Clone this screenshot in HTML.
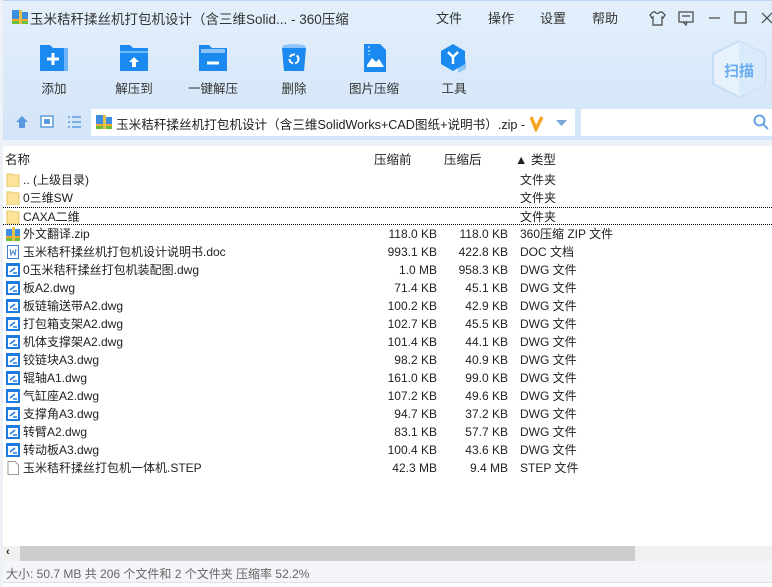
<!DOCTYPE html>
<html><head><meta charset="utf-8"><style>
*{margin:0;padding:0;box-sizing:border-box}
body{width:772px;height:587px;overflow:hidden;background:#fff;font-family:"Liberation Sans","Noto Sans CJK SC",sans-serif;font-size:12px;color:#222;position:relative}
.top{position:absolute;left:3px;top:0;width:769px;height:140px;background:linear-gradient(#e3effb,#d3e5f8);border-top:1px solid #b9d4ee}
.t{position:absolute;white-space:nowrap}
.menu{font-size:13px;color:#333;top:7px}
.tb{position:absolute;top:42px;width:80px;text-align:center}
.tb .ic{margin:0 auto;width:32px;height:30px}
.tb .lb{margin-top:2px;font-size:12.5px;color:#333}
.row{position:absolute;left:3px;width:769px;height:18px;line-height:18px}
.row span{position:absolute}
.nm{left:20px}.a{right:335px}.b{right:264px}.c{left:517px}
.fi{left:3px;top:2px;width:14px;height:14px}
</style></head><body>
<div style="position:absolute;left:0;top:0;width:3px;height:587px;background:#eef2f6"></div>
<div class="top">
 <svg style="position:absolute;left:9px;top:9px" width="16" height="14"><rect x="0" y="2" width="16" height="12" fill="#3d8fe0"/><rect x="0" y="0" width="7" height="4" fill="#3d8fe0"/><rect x="0" y="9" width="16" height="5" fill="#f3a733"/><rect x="0" y="11" width="16" height="3" fill="#6cbf3a"/><rect x="7" y="0" width="3" height="14" fill="#e8c04a"/></svg>
 <div class="t" style="left:27px;top:7px;font-size:13.5px;color:#333">玉米秸秆揉丝机打包机设计（含三维Solid... - 360压缩</div>
 <div class="t menu" style="left:433px">文件</div>
 <div class="t menu" style="left:485px">操作</div>
 <div class="t menu" style="left:537px">设置</div>
 <div class="t menu" style="left:589px">帮助</div>
 <svg style="position:absolute;left:646px;top:9px" width="110" height="16" fill="none" stroke="#444" stroke-width="1.2"><path d="M4 2 L1 5 L3 8 L4 7 L4 15 L13 15 L13 7 L14 8 L16 5 L13 2 L11 2 Q8.5 5 6 2Z"/><rect x="30" y="2" width="14" height="10"/><path d="M34 12 L37 15 L38 12 M33 6 H41"/><path d="M60 8 H71"/><rect x="86" y="2" width="11" height="11"/></svg>
 <svg style="position:absolute;left:758px;top:11px" width="12" height="12" stroke="#444" stroke-width="1.2"><path d="M1 1 L11 11 M11 1 L1 11"/></svg>
 <div class="tb" style="left:11px"><svg class="ic" viewBox="0 0 32 30"><path d="M2 2 H12 L15 5 H30 V28 H2Z" fill="#1a8af0"/><path d="M26 5 H30 V28 H26Z" fill="#6cb4f7"/><path d="M15 10 V22 M9 16 H21" stroke="#fff" stroke-width="3"/></svg><div class="lb">添加</div></div>
 <div class="tb" style="left:91px"><svg class="ic" viewBox="0 0 32 30"><path d="M2 2 H12 L15 5 H30 V28 H2Z" fill="#1a8af0"/><path d="M2 9 H30" stroke="#8cc6f8" stroke-width="1.5"/><path d="M16 14 L11 19 H14 V24 H18 V19 H21Z" fill="#fff"/></svg><div class="lb">解压到</div></div>
 <div class="tb" style="left:170px"><svg class="ic" viewBox="0 0 32 30"><path d="M2 2 H12 L15 5 H30 V28 H2Z" fill="#1a8af0"/><path d="M4 6 H28 V10 H4Z" fill="#8cc6f8"/><path d="M10 20 H22" stroke="#fff" stroke-width="3"/></svg><div class="lb">一键解压</div></div>
 <div class="tb" style="left:251px"><svg class="ic" viewBox="0 0 32 30"><ellipse cx="16" cy="4" rx="12" ry="3" fill="#8cc6f8"/><path d="M4 5 H28 L26 28 H6Z" fill="#1a8af0"/><circle cx="16" cy="16" r="4.5" fill="none" stroke="#fff" stroke-width="2" stroke-dasharray="6 2"/></svg><div class="lb">删除</div></div>
 <div class="tb" style="left:331px"><svg class="ic" viewBox="0 0 32 30"><path d="M6 1 H22 L28 7 V29 H6Z" fill="#1a8af0"/><path d="M9 22 L14 15 L18 19 L21 16 L26 24 H9Z" fill="#fff"/><path d="M11 3 V12" stroke="#8cc6f8" stroke-width="2" stroke-dasharray="2 2"/></svg><div class="lb">图片压缩</div></div>
 <div class="tb" style="left:411px"><svg class="ic" viewBox="0 0 32 30"><path d="M20 14 L28 18 V26 L20 30Z" fill="#8cc6f8"/><path d="M15 1 L27 8 V21 L15 28 L3 21 V8Z" fill="#1a8af0"/><path d="M10 9 L15 14 L20 9 M15 14 V21" stroke="#fff" stroke-width="2.5" fill="none"/></svg><div class="lb">工具</div></div>
 <svg style="position:absolute;left:704px;top:38px" width="64" height="60"><path d="M32 2 L58 15 V45 L32 58 L6 45 V15Z" fill="#e8f2fc" stroke="#c5def5" stroke-width="2"/><path d="M32 2 L58 15 V45 L32 58Z" fill="#d9eafa"/><text x="32" y="37" font-size="15" font-weight="bold" fill="#6aaef0" text-anchor="middle" font-family="Noto Sans CJK SC,sans-serif">扫描</text></svg>
 <svg style="position:absolute;left:11px;top:113px" width="70" height="16"><path d="M8 2 L2 8 H5 V14 H11 V8 H14Z" fill="#5a9be0"/><rect x="27" y="2" width="12" height="11" fill="#fff" stroke="#5a9be0" stroke-width="1.5"/><rect x="30" y="5" width="6" height="5" fill="#5a9be0"/><path d="M54 3H56M58 3H67M54 8H56M58 8H67M54 13H56M58 13H67" stroke="#5a9be0" stroke-width="1.6"/></svg>
 <div style="position:absolute;left:88px;top:108px;width:484px;height:27px;background:#fff"></div>
 <svg style="position:absolute;left:93px;top:114px" width="16" height="14"><rect x="0" y="2" width="16" height="12" fill="#3d8fe0"/><rect x="0" y="0" width="7" height="4" fill="#3d8fe0"/><rect x="0" y="9" width="16" height="5" fill="#f3a733"/><rect x="0" y="11" width="16" height="3" fill="#6cbf3a"/><rect x="7" y="0" width="3" height="14" fill="#e8c04a"/></svg>
 <div class="t" style="left:113px;top:113px;font-size:12.6px;width:412px;overflow:hidden">玉米秸秆揉丝机打包机设计（含三维SolidWorks+CAD图纸+说明书）.zip - 解</div>
 <svg style="position:absolute;left:527px;top:113px" width="45" height="18"><path d="M1 3 L6 15 L12 3" stroke="#f5a623" stroke-width="3.5" fill="none"/><path d="M26 6 H37 L31.5 12Z" fill="#7aa6d8"/></svg>
 <div style="position:absolute;left:578px;top:108px;width:191px;height:27px;background:#fff"></div>
 <svg style="position:absolute;left:750px;top:113px" width="16" height="16" fill="none" stroke="#5a9be0" stroke-width="1.8"><circle cx="6.5" cy="6.5" r="5"/><path d="M10.5 10.5 L15 15"/></svg>
</div>
<div style="position:absolute;left:3px;top:140px;width:769px;height:6px;background:#eef3f9"></div>
<div style="position:absolute;left:3px;top:146px;width:769px;height:22px;background:#fff;font-size:12.5px">
 <span class="t" style="left:2px;top:3px">名称</span>
 <span class="t" style="left:371px;top:3px">压缩前</span>
 <span class="t" style="left:441px;top:3px">压缩后</span>
 <span class="t" style="left:512px;top:3px">▲ 类型</span>
</div>
<div id="rows"></div>
<div style="position:absolute;left:3px;top:546px;width:769px;height:15px;background:#f0f0f0"><div style="position:absolute;left:17px;top:0;width:615px;height:15px;background:#cdcdcd"></div><span class="t" style="left:3px;top:0;font-size:11px;font-weight:bold">‹</span></div>
<div style="position:absolute;left:3px;top:561px;width:769px;height:22px;background:#f4f5f9;border-bottom:1px solid #dde"></div>
<div class="t" style="left:6px;top:565px;font-size:12px;color:#666">大小: 50.7 MB 共 206 个文件和 2 个文件夹 压缩率 52.2%</div>
<script>
var d=[["f",".. (上级目录)","","","文件夹"],["f","0三维SW","","","文件夹"],["f","CAXA二维","","","文件夹"],["z","外文翻译.zip","118.0 KB","118.0 KB","360压缩 ZIP 文件"],["w","玉米秸秆揉丝机打包机设计说明书.doc","993.1 KB","422.8 KB","DOC 文档"],["g","0玉米秸秆揉丝打包机装配图.dwg","1.0 MB","958.3 KB","DWG 文件"],["g","板A2.dwg","71.4 KB","45.1 KB","DWG 文件"],["g","板链输送带A2.dwg","100.2 KB","42.9 KB","DWG 文件"],["g","打包箱支架A2.dwg","102.7 KB","45.5 KB","DWG 文件"],["g","机体支撑架A2.dwg","101.4 KB","44.1 KB","DWG 文件"],["g","铰链块A3.dwg","98.2 KB","40.9 KB","DWG 文件"],["g","辊轴A1.dwg","161.0 KB","99.0 KB","DWG 文件"],["g","气缸座A2.dwg","107.2 KB","49.6 KB","DWG 文件"],["g","支撑角A3.dwg","94.7 KB","37.2 KB","DWG 文件"],["g","转臂A2.dwg","83.1 KB","57.7 KB","DWG 文件"],["g","转动板A3.dwg","100.4 KB","43.6 KB","DWG 文件"],["s","玉米秸秆揉丝打包机一体机.STEP","42.3 MB","9.4 MB","STEP 文件"]];
var ic={f:'<svg class="fi" style="position:absolute"><path d="M1 1H6L7 2H13V14H1Z" fill="#fbe39a" stroke="#e6c463"/></svg>',
z:'<svg class="fi" style="position:absolute"><rect y="2" width="14" height="12" fill="#3d8fe0"/><rect y="9" width="14" height="5" fill="#f3a733"/><rect y="11" width="14" height="3" fill="#6cbf3a"/><rect x="6" width="3" height="14" fill="#e8c04a"/></svg>',
w:'<svg class="fi" style="position:absolute"><rect x="1.5" y="0.5" width="11" height="13" fill="#fff" stroke="#3d7fd0"/><path d="M4 4 L5 10 L7 6 L9 10 L10 4" stroke="#3d7fd0" fill="none"/></svg>',
g:'<svg class="fi" style="position:absolute"><rect width="14" height="14" fill="#1c7be0"/><rect x="2" y="3" width="10" height="9" fill="#fff"/><path d="M4 9 L9 5 M7 10 H11" stroke="#1c7be0" stroke-width="1.5"/></svg>',
s:'<svg class="fi" style="position:absolute"><path d="M2 0.5H9L12.5 4V13.5H2Z" fill="#fff" stroke="#999"/></svg>'};
var h='';d.forEach(function(r,i){var y=171+i*18;h+='<div class="row" style="top:'+y+'px'+(i==2?';border-top:1px dotted #000;border-bottom:1px dotted #000':'')+'">'+ic[r[0]]+'<span class="nm">'+r[1]+'</span><span class="a">'+r[2]+'</span><span class="b">'+r[3]+'</span><span class="c">'+r[4]+'</span></div>';});
document.getElementById('rows').innerHTML=h;
</script>
</body></html>
